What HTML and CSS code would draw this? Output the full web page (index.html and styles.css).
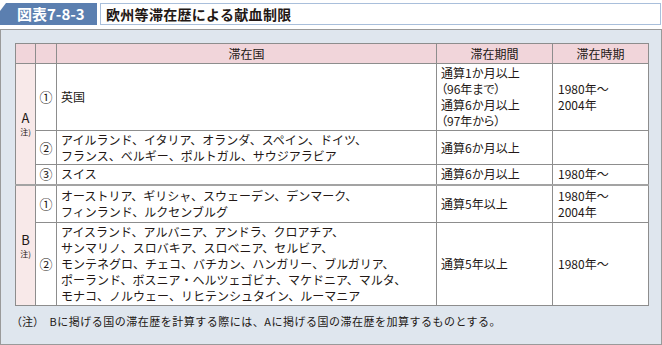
FILE: index.html
```html
<!DOCTYPE html>
<html lang="ja">
<head>
<meta charset="utf-8">
<link rel="stylesheet" href="styles.css">
</head>
<body>
<div class="fig">
  <div class="head">
    <div class="label">図表7-8-3</div>
    <div class="title">欧州等滞在歴による献血制限</div>
  </div>
  <div class="panel">
    <table class="tbl">
      <colgroup>
        <col class="c1"><col class="c2"><col class="c3"><col class="c4"><col class="c5">
      </colgroup>
      <thead>
        <tr class="r-head">
          <th class="grp"></th><th></th><th>滞在国</th><th>滞在期間</th><th>滞在時期</th>
        </tr>
      </thead>
      <tbody>
        <tr class="r-a1">
          <td class="grp" rowspan="3"><span class="gl">A</span><span class="gn">注)</span></td>
          <td class="num">①</td>
          <td>英国</td>
          <td>通算1か月以上<br><span class="pp">（96年まで）</span><br>通算6か月以上<br><span class="pp">（97年から）</span></td>
          <td>1980年～<br>2004年</td>
        </tr>
        <tr class="r-a2">
          <td class="num">②</td>
          <td>アイルランド、イタリア、オランダ、スペイン、ドイツ、<br>フランス、ベルギー、ポルトガル、サウジアラビア</td>
          <td>通算6か月以上</td>
          <td></td>
        </tr>
        <tr class="r-a3">
          <td class="num">③</td>
          <td>スイス</td>
          <td>通算6か月以上</td>
          <td>1980年～</td>
        </tr>
        <tr class="r-b1">
          <td class="grp" rowspan="2"><span class="gl">B</span><span class="gn">注)</span></td>
          <td class="num">①</td>
          <td>オーストリア、ギリシャ、スウェーデン、デンマーク、<br>フィンランド、ルクセンブルグ</td>
          <td>通算5年以上</td>
          <td>1980年～<br>2004年</td>
        </tr>
        <tr class="r-b2">
          <td class="num">②</td>
          <td>アイスランド、アルバニア、アンドラ、クロアチア、<br>サンマリノ、スロバキア、スロベニア、セルビア、<br>モンテネグロ、チェコ、バチカン、ハンガリー、ブルガリア、<br>ポーランド、ボスニア・ヘルツェゴビナ、マケドニア、マルタ、<br>モナコ、ノルウェー、リヒテンシュタイン、ルーマニア</td>
          <td>通算5年以上</td>
          <td>1980年～</td>
        </tr>
      </tbody>
    </table>
    <p class="note"><span class="note-mark">（注）</span><span class="note-text">Bに掲げる国の滞在歴を計算する際には、Aに掲げる国の滞在歴を加算するものとする。</span></p>
  </div>
</div>
</body>
</html>
```

FILE: styles.css
```css
html, body {
  margin: 0;
  padding: 0;
  background: #ffffff;
}
body {
  font-family: "Noto Sans CJK JP", "Noto Sans", sans-serif;
  color: #231815;
  width: 662px;
  height: 345px;
  overflow: hidden;
}
.fig {
  width: 662px;
}
.head {
  display: flex;
  padding-top: 3px;
  height: 22px;
  gap: 3px;
}
.label {
  width: 97px;
  height: 22px;
  background: #5b7fb0;
  color: #ffffff;
  font-weight: bold;
  font-size: 15px;
  line-height: 22px;
  padding-left: 17px;
  box-sizing: border-box;
  clip-path: polygon(6px 0, 100% 0, 100% 100%, 0 100%, 0 8px);
}
.title {
  flex: 1;
  height: 22px;
  box-sizing: border-box;
  border: 1px solid #a9bfdb;
  background: #ffffff;
  font-weight: bold;
  font-size: 14px;
  letter-spacing: 0.3px;
  line-height: 20px;
  padding-left: 5px;
  margin-right: 1px;
}
.panel {
  margin-top: 4px;
  height: 316px;
  box-sizing: border-box;
  border: 1px solid #9a9a9a;
  background: #dfe6ee;
  padding: 13px 12px 0 14px;
}
.tbl {
  width: 633px;
  border-collapse: collapse;
  table-layout: fixed;
  font-size: 12px;
  line-height: 16px;
  background: #ffffff;
}
.c1 { width: 20px; }
.c2 { width: 21px; }
.c3 { width: 380px; }
.c4 { width: 116px; }
.c5 { width: 96px; }
.tbl th, .tbl td {
  border: 1px solid #8d8d8d;
  padding: 0 0 0 4px;
  vertical-align: middle;
  text-align: left;
  font-weight: normal;
}
.tbl th {
  background: #f1d5da;
  text-align: center;
  padding: 0;
}
.tbl td.grp {
  background: #f8e9e9;
  text-align: center;
  padding: 0;
}
.tbl th.grp {
  background: #f1d5da;
}
.tbl td.num {
  text-align: center;
  padding: 0;
  font-size: 13px;
}
.tbl td:last-child {
  padding-left: 5px;
}
.pp {
  font-feature-settings: "palt";
}
.gl {
  display: block;
  font-size: 13px;
  line-height: 16px;
}
.gn {
  display: block;
  font-size: 8px;
  line-height: 11px;
}
.r-head { height: 20px; }
.r-a1 { height: 67px; }
.r-a2 { height: 34px; }
.r-a3 { height: 20px; }
.r-b1 { height: 38px; }
.r-b2 { height: 83px; }
.r-b1 td {
  border-top: 2px solid #a3a3a3;
}
.note {
  margin: 7px 0 0 1px;
  font-size: 11px;
  line-height: 16px;
}
.note-mark {
  font-feature-settings: "palt";
  letter-spacing: 0.5px;
  margin-right: 10px;
}
.note-text {
  letter-spacing: 0.5px;
}
```
